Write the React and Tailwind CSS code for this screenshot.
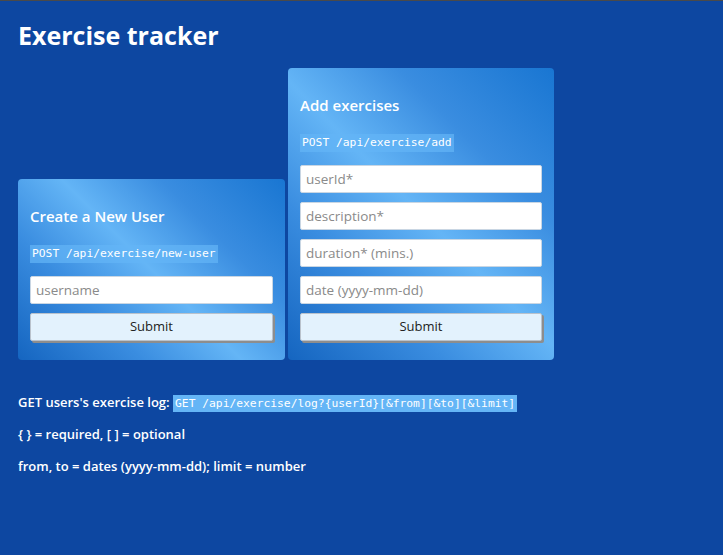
import React from 'react';

const cardBg =
    'bg-[linear-gradient(45deg,#1565c0_0%,#3a8de0_28%,#64b5f6_50%,#3a8de0_72%,#1976d2_100%)]';

const Field = ({ placeholder }) => (
    <input
        type="text"
        placeholder={placeholder}
        className="block w-full h-[28px] px-[5px] bg-white border border-[#c9d6e3] rounded-[2px] text-[13.5px] text-gray-800 placeholder:text-[#8a8a8a] outline-none"
    />
);

const SubmitButton = () => (
    <button
        type="button"
        className="block w-full h-[28px] bg-[#e3f2fd] border border-[#b9c2cc] rounded-[2px] shadow-[2px_2px_0_#8d8d8d] text-[13px] text-[#222]"
    >
        Submit
    </button>
);

const Code = ({ children, className = '' }) => (
    <code className={`inline-block h-[18px] leading-[18px] px-[2px] text-white font-['DejaVu_Sans_Mono',monospace] text-[11.3px] font-normal ${className}`}>
        {children}
    </code>
);

const Card = ({ title, endpoint, fields, width }) => (
    <form className={`${cardBg} ${width} rounded-[4px] px-[12px] pt-[27px] pb-[19px]`}>
        <h3 className="text-white text-[15px] leading-[20px] font-semibold">{title}</h3>
        <div className="mt-[19px] flex">
            <Code className="bg-[#64b5f6]/70">{endpoint}</Code>
        </div>
        <div className="mt-[13px] flex flex-col gap-[9px]">
            {fields.map(f => (
                <Field key={f} placeholder={f} />
            ))}
            <SubmitButton />
        </div>
    </form>
);

export default function App() {
    return (
        <div className="min-h-screen bg-[#0d47a1] border-t border-[#4a4a4a] font-['Open_Sans',sans-serif] text-white">
            <div className="px-[18px] pt-[18px]">
                <h1 className="text-[25px] leading-[32px] font-bold">Exercise tracker</h1>

                <div className="mt-[17px] flex items-end gap-[3px]">
                    <Card
                        title="Create a New User"
                        endpoint="POST /api/exercise/new-user"
                        fields={['username']}
                        width="w-[267px]"
                    />
                    <Card
                        title="Add exercises"
                        endpoint="POST /api/exercise/add"
                        fields={['userId*', 'description*', 'duration* (mins.)', 'date (yyyy-mm-dd)']}
                        width="w-[266px]"
                    />
                </div>

                <div className="mt-[32px] text-[13px] font-semibold leading-[20px] flex flex-col gap-[12px]">
                    <p>
                        GET users's exercise log:{' '}
                        <Code className="!h-[17px] !leading-[17px] bg-[#64b5f6]">
                            GET /api/exercise/log?{'{userId}'}[&amp;from][&amp;to][&amp;limit]
                        </Code>
                    </p>
                    <p>{'{ }'} = required, [ ] = optional</p>
                    <p>from, to = dates (yyyy-mm-dd); limit = number</p>
                </div>
            </div>
        </div>
    );
}
